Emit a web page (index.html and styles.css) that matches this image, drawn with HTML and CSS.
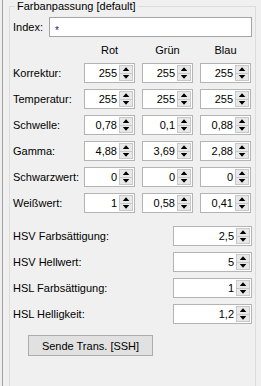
FILE: index.html
```html
<!DOCTYPE html>
<html lang="de">
<head>
<meta charset="utf-8">
<link rel="stylesheet" href="styles.css">
</head>
<body>
<div class="panel">
  <fieldset class="group">
    <legend class="title">Farbanpassung [default]</legend>
    <div class="index-row">
      <span class="index-label">Index:</span>
      <div class="textbox"><span class="star">*</span></div>
    </div>
    <div class="matrix">
      <div class="row head">
        <span class="lbl"></span><span class="hdr">Rot</span><span class="hdr">Grün</span><span class="hdr">Blau</span>
      </div>
      <div class="row">
        <span class="lbl">Korrektur:</span>
        <div class="spin"><span class="val">255</span><span class="arr"><i class="up"></i><i class="dn"></i></span></div>
        <div class="spin"><span class="val">255</span><span class="arr"><i class="up"></i><i class="dn"></i></span></div>
        <div class="spin"><span class="val">255</span><span class="arr"><i class="up"></i><i class="dn"></i></span></div>
      </div>
      <div class="row">
        <span class="lbl">Temperatur:</span>
        <div class="spin"><span class="val">255</span><span class="arr"><i class="up"></i><i class="dn"></i></span></div>
        <div class="spin"><span class="val">255</span><span class="arr"><i class="up"></i><i class="dn"></i></span></div>
        <div class="spin"><span class="val">255</span><span class="arr"><i class="up"></i><i class="dn"></i></span></div>
      </div>
      <div class="row">
        <span class="lbl">Schwelle:</span>
        <div class="spin"><span class="val">0,78</span><span class="arr"><i class="up"></i><i class="dn"></i></span></div>
        <div class="spin"><span class="val">0,1</span><span class="arr"><i class="up"></i><i class="dn"></i></span></div>
        <div class="spin"><span class="val">0,88</span><span class="arr"><i class="up"></i><i class="dn"></i></span></div>
      </div>
      <div class="row">
        <span class="lbl">Gamma:</span>
        <div class="spin"><span class="val">4,88</span><span class="arr"><i class="up"></i><i class="dn"></i></span></div>
        <div class="spin"><span class="val">3,69</span><span class="arr"><i class="up"></i><i class="dn"></i></span></div>
        <div class="spin"><span class="val">2,88</span><span class="arr"><i class="up"></i><i class="dn"></i></span></div>
      </div>
      <div class="row">
        <span class="lbl">Schwarzwert:</span>
        <div class="spin"><span class="val">0</span><span class="arr"><i class="up"></i><i class="dn"></i></span></div>
        <div class="spin"><span class="val">0</span><span class="arr"><i class="up"></i><i class="dn"></i></span></div>
        <div class="spin"><span class="val">0</span><span class="arr"><i class="up"></i><i class="dn"></i></span></div>
      </div>
      <div class="row">
        <span class="lbl">Weißwert:</span>
        <div class="spin"><span class="val">1</span><span class="arr"><i class="up"></i><i class="dn"></i></span></div>
        <div class="spin"><span class="val">0,58</span><span class="arr"><i class="up"></i><i class="dn"></i></span></div>
        <div class="spin"><span class="val">0,41</span><span class="arr"><i class="up"></i><i class="dn"></i></span></div>
      </div>
    </div>

    <div class="singles">
      <div class="row">
        <span class="lbl wide">HSV Farbsättigung:</span>
        <div class="spin long"><span class="val">2,5</span><span class="arr"><i class="up"></i><i class="dn"></i></span></div>
      </div>
      <div class="row">
        <span class="lbl wide">HSV Hellwert:</span>
        <div class="spin long"><span class="val">5</span><span class="arr"><i class="up"></i><i class="dn"></i></span></div>
      </div>
      <div class="row">
        <span class="lbl wide">HSL Farbsättigung:</span>
        <div class="spin long"><span class="val">1</span><span class="arr"><i class="up"></i><i class="dn"></i></span></div>
      </div>
      <div class="row">
        <span class="lbl wide">HSL Helligkeit:</span>
        <div class="spin long"><span class="val">1,2</span><span class="arr"><i class="up"></i><i class="dn"></i></span></div>
      </div>
    </div>

    <button class="btn" type="button">Sende Trans. [SSH]</button>
  </fieldset>
</div>
</body>
</html>
```

FILE: styles.css
```css
html, body {
  margin: 0;
  padding: 0;
  background: #f0f0f0;
  overflow: hidden;
}
body {
  font-family: "Liberation Sans", Arial, sans-serif;
  font-size: 11px;
  color: #000;
  width: 261px;
  height: 386px;
}
.panel {
  margin-left: 2px;
  border-left: 1px solid #a0a0a0;
  height: 386px;
  box-sizing: border-box;
  display: flex;
  flex-direction: column;
}
.group {
  flex: 1;
  margin: 0 0 0 6px;
  padding: 0 0 0 3px;
  width: 247px;
  box-sizing: border-box;
  border: 1px solid #dcdcdc;
  border-bottom: none;
  min-width: 0;
  min-height: 0;
}
.title {
  margin-left: 2px;
  padding: 0 2px;
  line-height: 13px;
  font-size: 11px;
}
.index-row {
  display: flex;
  align-items: center;
  margin-top: 4px;
  height: 20px;
}
.index-label {
  width: 36px;
  flex: none;
}
.textbox {
  width: 203px;
  flex: none;
  height: 20px;
  box-sizing: border-box;
  border: 1px solid #a5a5a5;
  background: #fff;
  padding-left: 5px;
  line-height: 18px;
  color: #1b1b6b;
}
.star {
  font-size: 10px;
  vertical-align: -3px;
}
.matrix {
  display: flex;
  flex-direction: column;
  gap: 6px;
  margin-top: 6px;
}
.row {
  display: flex;
  gap: 7px;
  height: 20px;
}
.row.head {
  height: 14px;
}
.lbl {
  flex: none;
  width: 64px;
  line-height: 20px;
  white-space: nowrap;
}
.lbl.wide {
  width: 153px;
}
.hdr {
  flex: none;
  width: 51px;
  text-align: center;
  line-height: 14px;
}
.spin {
  flex: none;
  display: flex;
  width: 51px;
  height: 20px;
  box-sizing: border-box;
  border: 1px solid #b4b4b4;
  background: #fff;
}
.spin.long {
  width: 79px;
}
.val {
  flex: 1;
  min-width: 0;
  text-align: right;
  line-height: 18px;
  padding-right: 2px;
}
.arr {
  flex: none;
  width: 14px;
  margin: 1px 1px 1px 0;
  display: flex;
  flex-direction: column;
  background: #e8e8e8;
  border: 1px solid #c8c8c8;
  box-sizing: border-box;
}
.arr i {
  flex: 1;
  display: flex;
  align-items: center;
  justify-content: center;
}
.arr i.up {
  border-bottom: 1px solid #c8c8c8;
}
.arr i::before {
  content: "";
  width: 7px;
  height: 4px;
  background: #000;
}
.arr i.up::before {
  clip-path: polygon(50% 0, 100% 100%, 0 100%);
}
.arr i.dn::before {
  clip-path: polygon(0 0, 100% 0, 50% 100%);
}
.singles {
  display: flex;
  flex-direction: column;
  gap: 6px;
  margin-top: 13px;
}
.btn {
  display: block;
  margin: 11px 0 0 15px;
  width: 125px;
  height: 21px;
  background: #e1e1e1;
  border: 1px solid #adadad;
  border-radius: 0;
  font-family: "Liberation Sans", Arial, sans-serif;
  font-size: 11px;
  color: #000;
  padding: 0;
}
```
